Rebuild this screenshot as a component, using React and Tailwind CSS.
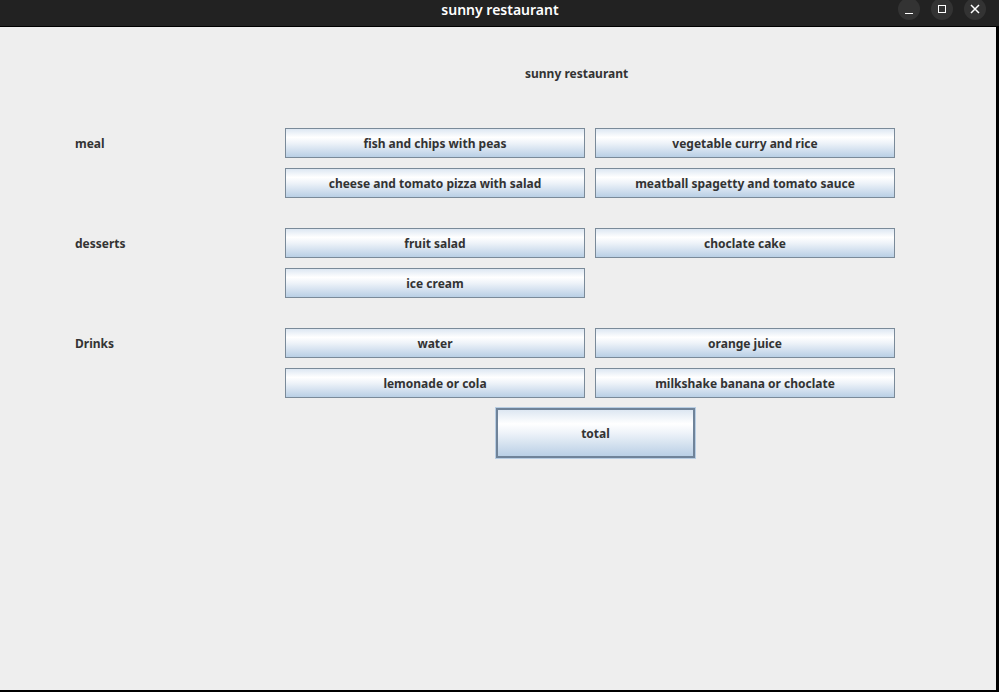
import React from "react";

const menu = [
  {
    label: "meal",
    items: [
      "fish and chips with peas",
      "vegetable curry and rice",
      "cheese and tomato pizza with salad",
      "meatball spagetty and tomato sauce",
    ],
  },
  {
    label: "desserts",
    items: ["fruit salad", "choclate cake", "ice cream"],
  },
  {
    label: "Drinks",
    items: [
      "water",
      "orange juice",
      "lemonade or cola",
      "milkshake banana or choclate",
    ],
  },
];

const btnBg =
  "bg-[linear-gradient(to_bottom,#dde7f2_0%,#ffffff_30%,#eef3f9_50%,#b9cfe5_100%)]";

const MenuButton = ({ text }) => (
  <button
    className={`h-[30px] w-[300px] pt-[2px] border border-[#7a8a99] ${btnBg} text-[12px] font-bold text-[#333333]`}
  >
    {text}
  </button>
);

function App() {
  return (
    <div
      className="w-[999px] h-[692px] flex flex-col bg-black overflow-hidden"
      style={{ fontFamily: '"Noto Sans", "Open Sans", sans-serif' }}
    >
      {/* title bar */}
      <div className="h-[27px] shrink-0 bg-[#222222] border-b border-black flex items-center relative">
        <div className="flex-1 text-center text-white text-[14px] font-semibold -mt-[7px] pl-[1px]">
          sunny restaurant
        </div>
        <div className="absolute right-[13px] top-[-2px] flex gap-[11px]">
          <span className="w-[22px] h-[22px] rounded-full bg-[#333333] flex items-end justify-center pb-[6px]">
            <span className="w-[8px] h-[1.5px] bg-white" />
          </span>
          <span className="w-[22px] h-[22px] rounded-full bg-[#333333] flex items-center justify-center">
            <span className="w-[8px] h-[8px] border border-white" />
          </span>
          <span className="w-[22px] h-[22px] rounded-full bg-[#333333] flex items-center justify-center">
            <svg width="10" height="10" viewBox="0 0 10 10">
              <path d="M1 1L9 9M9 1L1 9" stroke="white" strokeWidth="1.5" />
            </svg>
          </span>
        </div>
      </div>

      {/* content */}
      <div className="flex-1 mr-[3px] mb-[2px] bg-[#eeeeee] text-[#333333]">
        <div className="pt-[39px] pl-[525px] h-[101px] text-[12px] font-bold leading-[16px]">
          sunny restaurant
        </div>
        <div className="flex flex-col gap-[30px] pl-[75px]">
          {menu.map((sec) => (
            <div key={sec.label} className="flex">
              <div className="w-[210px] h-[30px] pt-[2px] flex items-center text-[12px] font-bold">
                {sec.label}
              </div>
              <div className="grid grid-cols-[300px_300px] gap-[10px]">
                {sec.items.map((it) => (
                  <MenuButton key={it} text={it} />
                ))}
              </div>
            </div>
          ))}
        </div>
        <div className="mt-[10px] pl-[496px]">
          <button
            className={`w-[199px] h-[50px] pt-[2px] border-2 border-[#6f8399] shadow-[0_0_0_1px_#b8cde2] ${btnBg} text-[12px] font-bold text-[#333333]`}
          >
            total
          </button>
        </div>
      </div>
    </div>
  );
}

export default App;
